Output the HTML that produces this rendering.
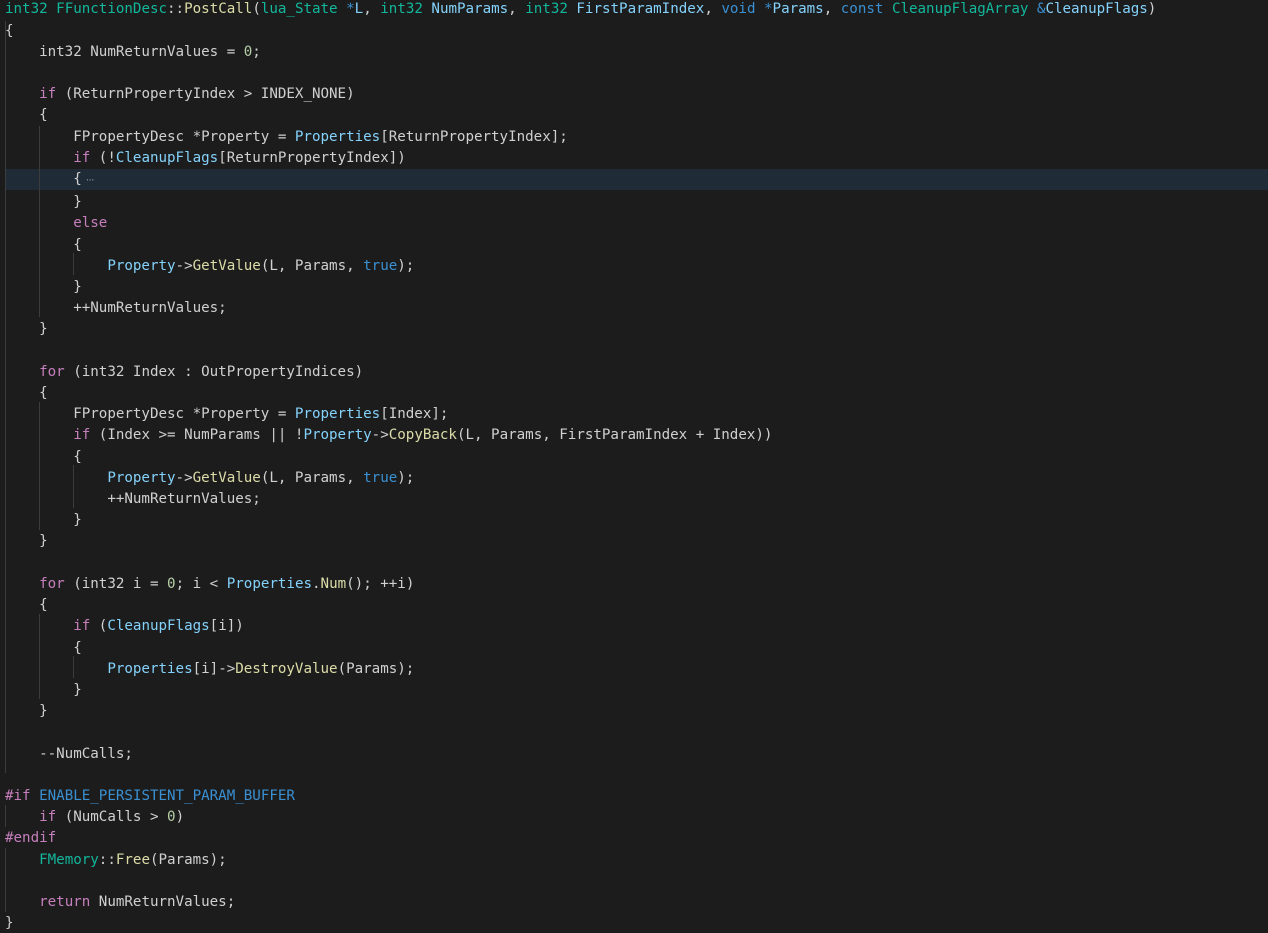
<!DOCTYPE html>
<html><head><meta charset="utf-8"><style>
html,body{margin:0;padding:0;background:#1c1c1c;width:1268px;height:933px;overflow:hidden}
#w{position:relative;width:1268px;height:933px;overflow:hidden;background:#1c1c1c}
pre{position:absolute;left:5px;top:-.6px;margin:0;font:14.2px/21.2px "DejaVu Sans Mono","Liberation Mono",monospace;color:#d0d0d0;letter-spacing:-.015px;font-variant-ligatures:none}
.hl{position:absolute;left:5px;right:0;top:169px;height:21px;background:#1f2c38}
.g{position:absolute;width:1px;background:#3c3c3c}
.t{color:#12b79c}.k{color:#c67fbd}.f{color:#dcdca8}.v{color:#84d2fb}.b{color:#3a90d2}.n{color:#b5cea8}
.d{color:#8a8a8a;font-size:9px;letter-spacing:-2.75px;margin-left:3px}
</style></head><body><div id="w">
<div class="hl"></div>
<div class="g" style="left:5px;top:21px;height:752px"></div>
<div class="g" style="left:5px;top:805px;height:22px"></div>
<div class="g" style="left:5px;top:848px;height:64px"></div>
<div class="g" style="left:39px;top:126px;height:191px"></div>
<div class="g" style="left:39px;top:402px;height:128px"></div>
<div class="g" style="left:39px;top:614px;height:85px"></div>
<div class="g" style="left:73px;top:253px;height:22px"></div>
<div class="g" style="left:73px;top:465px;height:43px"></div>
<div class="g" style="left:73px;top:656px;height:22px"></div>
<pre><span class="t">int32</span> <span class="t">FFunctionDesc</span>::<span class="f">PostCall</span>(<span class="t">lua_State</span> <span class="b">*</span><span class="v">L</span>, <span class="t">int32</span> <span class="v">NumParams</span>, <span class="t">int32</span> <span class="v">FirstParamIndex</span>, <span class="b">void</span> <span class="b">*</span><span class="v">Params</span>, <span class="b">const</span> <span class="t">CleanupFlagArray</span> <span class="b">&amp;</span><span class="v">CleanupFlags</span>)
{
    int32 NumReturnValues = <span class="n">0</span>;

    <span class="k">if</span> (ReturnPropertyIndex &gt; INDEX_NONE)
    {
        FPropertyDesc *Property = <span class="v">Properties</span>[ReturnPropertyIndex];
        <span class="k">if</span> (!<span class="v">CleanupFlags</span>[ReturnPropertyIndex])
        {<span class="d">···</span>
        }
        <span class="k">else</span>
        {
            <span class="v">Property</span>-&gt;<span class="f">GetValue</span>(L, Params, <span class="b">true</span>);
        }
        ++NumReturnValues;
    }

    <span class="k">for</span> (int32 Index : OutPropertyIndices)
    {
        FPropertyDesc *Property = <span class="v">Properties</span>[Index];
        <span class="k">if</span> (Index &gt;= NumParams || !<span class="v">Property</span>-&gt;<span class="f">CopyBack</span>(L, Params, FirstParamIndex + Index))
        {
            <span class="v">Property</span>-&gt;<span class="f">GetValue</span>(L, Params, <span class="b">true</span>);
            ++NumReturnValues;
        }
    }

    <span class="k">for</span> (int32 i = <span class="n">0</span>; i &lt; <span class="v">Properties</span>.<span class="f">Num</span>(); ++i)
    {
        <span class="k">if</span> (<span class="v">CleanupFlags</span>[i])
        {
            <span class="v">Properties</span>[i]-&gt;<span class="f">DestroyValue</span>(Params);
        }
    }

    --NumCalls;

<span class="k">#if</span> <span class="b">ENABLE_PERSISTENT_PARAM_BUFFER</span>
    <span class="k">if</span> (NumCalls &gt; <span class="n">0</span>)
<span class="k">#endif</span>
    <span class="t">FMemory</span>::<span class="f">Free</span>(Params);

    <span class="k">return</span> NumReturnValues;
}</pre>
</div></body></html>
